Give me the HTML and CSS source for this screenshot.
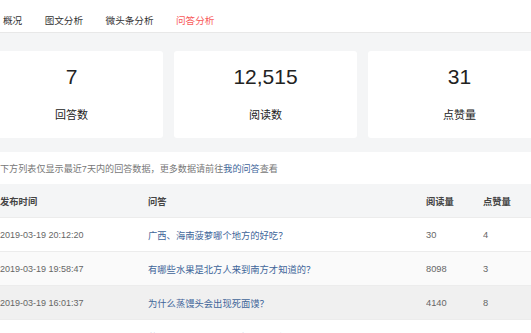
FILE: index.html
```html
<!DOCTYPE html>
<html lang="zh">
<head>
<meta charset="utf-8">
<link rel="stylesheet" href="styles.css">
</head>
<body>
<div class="page">
  <nav class="tabs">
    <span class="tab">概况</span>
    <span class="tab">图文分析</span>
    <span class="tab">微头条分析</span>
    <span class="tab active">问答分析</span>
  </nav>
  <div class="cards">
    <div class="card"><div class="num">7</div><div class="label">回答数</div></div>
    <div class="card"><div class="num">12,515</div><div class="label">阅读数</div></div>
    <div class="card"><div class="num">31</div><div class="label">点赞量</div></div>
  </div>
  <section class="panel">
    <p class="note">下方列表仅显示最近7天内的回答数据，更多数据请前往<span class="link">我的问答</span>查看</p>
    <table class="tbl">
      <colgroup><col class="c1"><col class="c2"><col class="c3"><col class="c4"></colgroup>
      <thead>
        <tr><th>发布时间</th><th>问答</th><th>阅读量</th><th>点赞量</th></tr>
      </thead>
      <tbody>
        <tr><td class="date">2019-03-19 20:12:20</td><td class="q">广西、海南菠萝哪个地方的好吃？</td><td>30</td><td>4</td></tr>
        <tr class="alt"><td class="date">2019-03-19 19:58:47</td><td class="q">有哪些水果是北方人来到南方才知道的？</td><td>8098</td><td>3</td></tr>
        <tr class="hover"><td class="date">2019-03-19 16:01:37</td><td class="q">为什么蒸馒头会出现死面馍？</td><td>4140</td><td>8</td></tr>
        <tr><td class="date">2019-03-19 15:48:32</td><td class="q">蒸馒头什么面粉发酵最好又可以放？</td><td>103</td><td>1</td></tr>
      </tbody>
    </table>
  </section>
</div>
</body>
</html>
```
FILE: styles.css
```css
html, body {
  margin: 0;
  padding: 0;
  background: #f4f5f6;
  overflow: hidden;
}
body {
  width: 531px;
  height: 333px;
  font-family: "Liberation Sans", "Noto Sans CJK SC", sans-serif;
  color: #222;
}
.page {
  margin-left: -20px;
  width: 571px;
}
.tabs {
  display: flex;
  align-items: center;
  gap: 22.5px;
  padding-left: 23px;
  padding-top: 8px;
  box-sizing: border-box;
  height: 33px;
  background: #fff;
  border-bottom: 1px solid #e8e8e8;
  font-size: 9.6px;
  color: #333;
}
.tab.active { color: #f85959; }
.cards {
  display: flex;
  gap: 11px;
  margin-top: 18px;
}
.card {
  width: 183px;
  height: 87px;
  background: #fff;
  border-radius: 3px;
  display: flex;
  flex-direction: column;
  align-items: center;
}
.num {
  margin-top: 14px;
  height: 24px;
  line-height: 24px;
  font-size: 21px;
  color: #222;
}
.label {
  margin-top: 18px;
  font-size: 11px;
  line-height: 16px;
  color: #222;
}
.panel {
  margin-top: 14px;
  background: #fff;
  padding: 0 20px;
  height: 200px;
}
.note {
  margin: 0;
  height: 32px;
  display: flex;
  align-items: center;
  font-size: 9.1px;
  color: #777;
}
.link { color: #406599; }
.tbl {
  width: 531px;
  border-collapse: collapse;
  table-layout: fixed;
  font-size: 9.3px;
}
.c1 { width: 148px; }
.c2 { width: 278px; }
.c3 { width: 57px; }
.c4 { width: 48px; }
.tbl th {
  background: #f4f5f6;
  height: 33px;
  padding: 0;
  text-align: left;
  font-weight: bold;
  color: #444;
}
.tbl td {
  height: 33px;
  padding: 0;
  border-top: 1px solid #ececec;
  color: #666;
  white-space: nowrap;
  overflow: hidden;
}
.tbl td.date { font-size: 9px; }
.tbl td.q { color: #406599; }
.tbl tr.alt td { background: #fafafa; }
.tbl tr.hover td { background: #f0f0f0; }
```
